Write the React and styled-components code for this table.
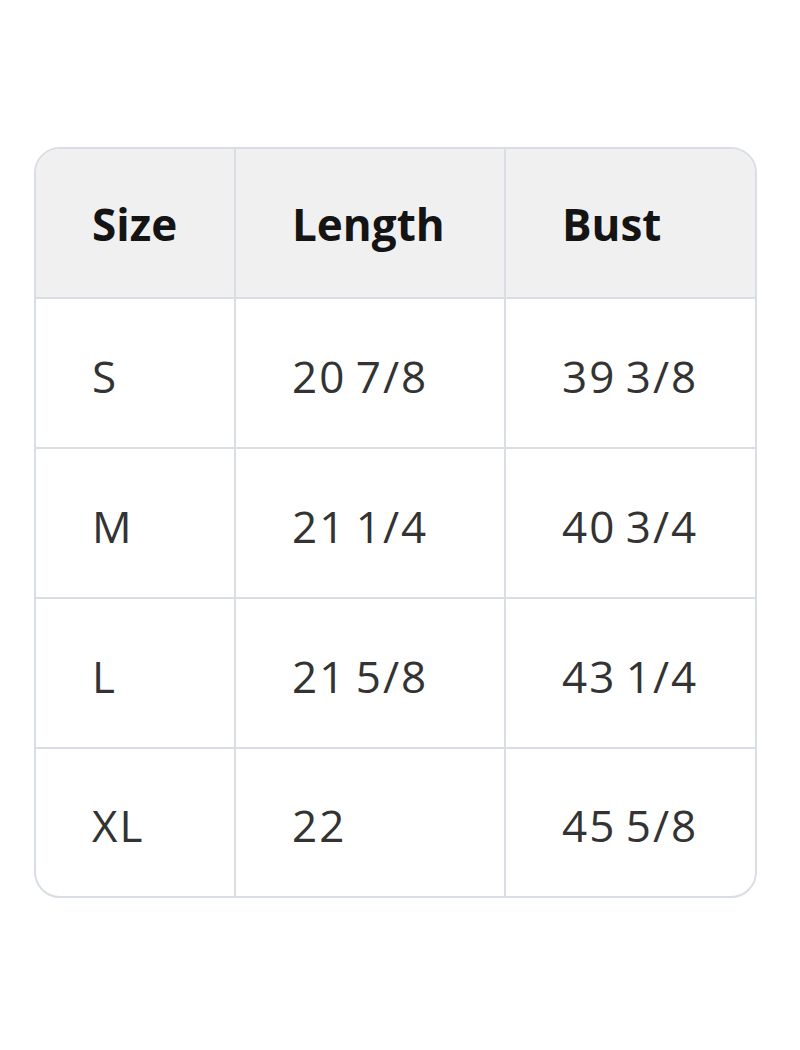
import React from 'react';
import styled, { createGlobalStyle } from 'styled-components';

const GlobalStyle = createGlobalStyle`
	body {
		margin: 0;
		background: #ffffff;
		font-family: "Open Sans", "Noto Sans", "Liberation Sans", sans-serif;
	}
`;

const Page = styled.div`
	width: 800px;
	height: 1050px;
	padding: 147px 0 0 34px;
	box-sizing: border-box;
`;

const Frame = styled.div`
	width: 723px;
	border: 2px solid #d9dee4;
	border-radius: 26px;
	overflow: hidden;
	box-sizing: border-box;
`;

const Table = styled.table`
	width: 100%;
	border-collapse: separate;
	border-spacing: 0;
	table-layout: fixed;
`;

const HeadCell = styled.th`
	height: 150px;
	padding: 2px 0 0 56px;
	text-align: left;
	font-size: 44px;
	font-weight: 700;
	color: #141414;
	background: #f0f0f0;
	border-right: ${({ last }) => (last ? 'none' : '2px solid #d9dee4')};
	border-bottom: 2px solid #d9dee4;
	box-sizing: border-box;
`;

const Cell = styled.td`
	height: ${({ bottom }) => (bottom ? '147px' : '150px')};
	padding: 5px 0 0 56px;
	font-size: 44px;
	font-weight: 400;
	letter-spacing: 2px;
	word-spacing: -4px;
	color: #333333;
	border-right: ${({ last }) => (last ? 'none' : '2px solid #d9dee4')};
	border-bottom: ${({ bottom }) => (bottom ? 'none' : '2px solid #d9dee4')};
	box-sizing: border-box;
`;

const rows = [
	['S', '20 7/8', '39 3/8'],
	['M', '21 1/4', '40 3/4'],
	['L', '21 5/8', '43 1/4'],
	['XL', '22', '45 5/8']
];

const App = () => (
	<>
		<GlobalStyle />
		<Page>
			<Frame>
				<Table>
					<colgroup>
						<col style={{ width: 200 }} />
						<col style={{ width: 270 }} />
						<col />
					</colgroup>
					<thead>
						<tr>
							<HeadCell>Size</HeadCell>
							<HeadCell>Length</HeadCell>
							<HeadCell last>Bust</HeadCell>
						</tr>
					</thead>
					<tbody>
						{rows.map((row, i) => (
							<tr key={row[0]}>
								{row.map((value, j) => (
									<Cell key={j} last={j === 2} bottom={i === rows.length - 1}>
										{value}
									</Cell>
								))}
							</tr>
						))}
					</tbody>
				</Table>
			</Frame>
		</Page>
	</>
);

export default App;
